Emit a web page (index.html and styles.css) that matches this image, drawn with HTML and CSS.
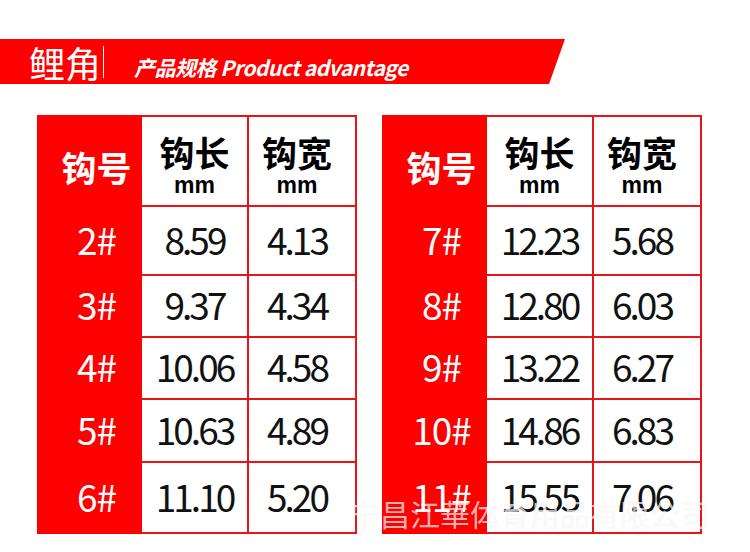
FILE: index.html
```html
<!DOCTYPE html>
<html lang="zh-CN">

<head>
    <meta charset="UTF-8">
    <title>鲤角 产品规格</title>
    <link rel="stylesheet" href="styles.css">
</head>

<body>
    <div class="banner">
        <span class="banner-title">鲤角</span>
        <span class="banner-bar"></span>
        <span class="banner-sub">产品规格 Product advantage</span>
    </div>

    <div class="tables">
        <table class="spec">
            <colgroup><col class="c1"><col class="c2"><col class="c3"></colgroup>
            <tr class="head">
                <th class="no">钩号</th>
                <th>钩长<span class="unit">mm</span></th>
                <th class="w">钩宽<span class="unit">mm</span></th>
            </tr>
            <tr class="r1"><td class="no">2#</td><td>8.59</td><td class="w">4.13</td></tr>
            <tr class="r2"><td class="no">3#</td><td>9.37</td><td class="w">4.34</td></tr>
            <tr class="r3"><td class="no">4#</td><td>10.06</td><td class="w">4.58</td></tr>
            <tr class="r4"><td class="no">5#</td><td>10.63</td><td class="w">4.89</td></tr>
            <tr class="r5"><td class="no">6#</td><td>11.10</td><td class="w">5.20</td></tr>
        </table>

        <table class="spec">
            <colgroup><col class="c1"><col class="c2"><col class="c3"></colgroup>
            <tr class="head">
                <th class="no">钩号</th>
                <th>钩长<span class="unit">mm</span></th>
                <th class="w">钩宽<span class="unit">mm</span></th>
            </tr>
            <tr class="r1"><td class="no">7#</td><td>12.23</td><td class="w">5.68</td></tr>
            <tr class="r2"><td class="no">8#</td><td>12.80</td><td class="w">6.03</td></tr>
            <tr class="r3"><td class="no">9#</td><td>13.22</td><td class="w">6.27</td></tr>
            <tr class="r4"><td class="no">10#</td><td>14.86</td><td class="w">6.83</td></tr>
            <tr class="r5"><td class="no">11#</td><td>15.55</td><td class="w">7.06</td></tr>
        </table>

        <div class="watermark">宁昌江華体育用品有限公司</div>
    </div>
</body>

</html>
```

FILE: styles.css
```css
body {
    margin: 0;
    padding: 0;
    background-color: #fff;
    font-family: "Noto Sans CJK SC", "Noto Sans", sans-serif;
}

.banner {
    display: flex;
    align-items: center;
    width: 565px;
    height: 45px;
    margin-top: 39px;
    background-color: #ff0000;
    clip-path: polygon(0 0, 565px 0, 549px 100%, 0 100%);
    color: #fff;
}

.banner-title {
    margin-left: 29px;
    font-size: 36px;
    letter-spacing: 0;
    line-height: 1;
}

.banner-bar {
    width: 1px;
    height: 32px;
    margin-left: 2px;
    background-color: #fff;
}

.banner-sub {
    margin-left: 30px;
    margin-top: 10px;
    font-size: 21px;
    font-weight: bold;
    font-style: italic;
    letter-spacing: -0.5px;
}

.tables {
    position: relative;
    display: flex;
    gap: 25px;
    padding-left: 37px;
    margin-top: 31px;
}

.spec {
    border-collapse: collapse;
    table-layout: fixed;
    width: 318px;
    border: 2px solid #e8141a;
}

.c1 {
    width: 103px;
}

.c2 {
    width: 107px;
}

.c3 {
    width: 108px;
}

.spec th,
.spec td {
    padding: 0;
    text-align: center;
    border: 2px solid #e8141a;
    line-height: 1;
}

.spec th {
    padding-top: 9px;
    font-size: 35px;
    font-weight: bold;
    color: #000;
}

.unit {
    display: block;
    margin-top: 5px;
    font-size: 23px;
    font-family: "Liberation Sans", Arial, sans-serif;
    font-weight: bold;
}

.spec td {
    padding-bottom: 3px;
    font-size: 37px;
    letter-spacing: -3px;
    color: #111;
}

.spec .w {
    padding-right: 10px;
}

.spec .no {
    background-color: #ff0000;
    border-color: #ff0000;
    color: #fff;
    letter-spacing: -1px;
}

.spec th.no {
    padding-top: 10px;
    padding-left: 14px;
    letter-spacing: 0;
}

.spec td.no {
    padding-left: 14px;
}

.head {
    height: 90px;
}

.r1 {
    height: 69px;
}

.r2,
.r3 {
    height: 62px;
}

.r4 {
    height: 63px;
}

.r5 {
    height: 71px;
}

.watermark {
    position: absolute;
    left: 350px;
    top: 376px;
    font-size: 30px;
    letter-spacing: 0;
    color: rgba(255, 255, 255, 0.7);
    text-shadow: 0 0 1px rgba(0, 0, 0, 0.08);
    white-space: nowrap;
}
```
